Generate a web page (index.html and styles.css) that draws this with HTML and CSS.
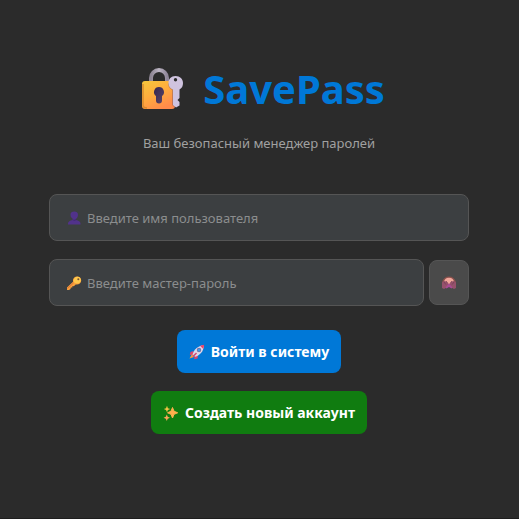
FILE: index.html
```html
<!DOCTYPE html>
<html lang="ru">
<head>
<meta charset="utf-8">
<meta name="viewport" content="width=device-width, initial-scale=1">
<title>SavePass</title>
<link rel="stylesheet" href="styles.css">
</head>
<body>
<main class="login">
  <header class="brand">
    <h1 class="title">
      <svg class="logo" viewBox="0 0 42 42" aria-hidden="true">
        <defs>
          <linearGradient id="gold" x1="0" y1="0" x2=".6" y2="1"><stop offset="0" stop-color="#f5c73c"/><stop offset=".5" stop-color="#ffad3d"/><stop offset="1" stop-color="#ff8a4b"/></linearGradient>
          <linearGradient id="steel" x1="0" y1="0" x2="1" y2="0"><stop offset="0" stop-color="#8d8593"/><stop offset=".5" stop-color="#bcb5c3"/><stop offset="1" stop-color="#8f8699"/></linearGradient>
          <linearGradient id="hole" x1="0" y1="0" x2="1" y2="1"><stop offset="0" stop-color="#35254f"/><stop offset="1" stop-color="#5b4668"/></linearGradient>
        </defs>
        <path d="M10 17V10a8 8 0 0 1 16 0v7" fill="none" stroke="url(#steel)" stroke-width="4"/>
        <rect x="1" y="13" width="33" height="28" rx="3" fill="url(#gold)"/>
        <path d="M2 16v21q0 3 4 3" fill="none" stroke="#d88a2e" stroke-width="1.500"/>
        <path d="M18 19a5 5 0 0 0-3 9v4.500a3 3 0 0 0 6 0V28a5 5 0 0 0-3-9z" fill="url(#hole)"/>
        <path d="M27 15q0 5 4 7v15l3 3v-20z" fill="#8b5f62" opacity=".5"/>
        <path fill-rule="evenodd" d="M34.500 8c-4.500 0-7 3-7 7 0 3 1.500 5.500 4.500 6.500V37l3 2.500 3.500-2V34l-2-2 2-2v-8.500c2.500-1.300 3.500-3.500 3.500-6.500 0-4-3-7-7.500-7zM34.500 10a1.700 1.700 0 1 1 0 3.400 1.700 1.700 0 0 1 0-3.400z" fill="#cfc3df"/>
      </svg>
      <span>SavePass</span>
    </h1>
    <p class="tagline">Ваш безопасный менеджер паролей</p>
  </header>
  <form class="form">
    <div class="field">
      <svg class="icon field-icon" viewBox="0 0 16 16" aria-hidden="true">
        <path d="M2 14.500v-1c0-2 2-3 4.500-3.500l.2-1.300C5 7.500 4.500 6.500 4.500 4.500 4.500 2.500 6 1.500 8.200 1.500s3.800 1.200 3.800 3.200c0 2-.8 3.300-2.200 4.200l.2 1.200c2.500.5 4.500 1.500 4.500 3.400v1z" fill="#51328a"/>
        <path d="M7 9.500q1.500.8 3-.6l.2 1.200q-1.500 1-3.400.2z" fill="#402670"/>
      </svg>
      <input class="input" type="text" placeholder="Введите имя пользователя" aria-label="Имя пользователя">
    </div>
    <div class="password-row">
      <div class="field">
        <svg class="icon field-icon" viewBox="0 0 16 16" aria-hidden="true">
          <path d="M1 12.500 7 6.800C6.500 4 8 1.800 10.700 1.500c2.600-.2 4.600 1.500 4.500 4-.1 2.800-2.700 4.600-5.500 4L7.800 11.200 6.500 11l-.2 1.400-1.500.1-.3 1.500-1.500 1H1z" fill="#f9a23b"/>
          <path d="M7.500 5.500C8 3 9.500 1.700 11.500 1.700c2 .1 3.300 1.500 3.400 3.300-.2 2-1.500 3.500-3.700 3.500-2 .1-3.400-1-3.700-3z" fill="#ffc94c"/>
          <path d="m1.500 13.500 6-5.500" stroke="#e2703b"/>
          <circle cx="12.300" cy="4.200" r="1" fill="#765437"/>
        </svg>
        <input class="input" type="password" placeholder="Введите мастер-пароль" aria-label="Мастер-пароль">
      </div>
      <button class="reveal" type="button" aria-label="Показать пароль">
        <svg class="icon" viewBox="0 0 16 16" aria-hidden="true">
          <path d="M1 7C2 3.500 4.500 1.500 8 1.500s6 2 7 5.500l-.5 4h-13z" fill="#8a504c"/>
          <path d="M3 7.500C3 4.500 5 2.700 8 2.700s5 1.800 5 4.800l-2 2H5z" fill="#f0a69a"/>
          <path d="M1 7.500 3 6l2 .5 3 2.500 3-2.500 2-.5 2 1.500V13l-2 1-2.500-1.500L8 10l-2.500 2.500L3 14l-2-1z" fill="#96516b"/>
          <path d="m4.500 12.500 3.500-4 3.500 4-1 1L8 12l-2.500 1.500z" fill="#a94b94"/>
          <path d="m3 7 1.800 2.500M5 6l1.500 2M13 7l-1.800 2.500M11 6 9.500 8" stroke="#733c54" stroke-width=".8"/>
        </svg>
      </button>
    </div>
    <div class="actions">
      <button class="action primary" type="submit">
        <svg class="icon" viewBox="0 0 16 16" aria-hidden="true">
          <path d="M4.500 7 1.500 8 .8 11l3.400-.5zM9 11l-.5 3.500-3.300.7.500-3.500z" fill="#e54368"/>
          <path d="m3 10-2.500 4.500L5 13z" fill="#ff9840"/>
          <path d="M3.500 10.500C5 5.500 8.500 2 15 1c-.3 6.500-4 10.300-9 11.800z" fill="#ded7e9"/>
          <path d="M11 1.800 15.200.8 14.300 5z" fill="#ef4168"/>
          <circle cx="10" cy="6" r="2.200" fill="#7d6a9b"/><circle cx="10" cy="6" r="1.500" fill="#4199e6"/>
          <path d="M4 12.500 7.500 9" stroke="#d94a72" stroke-width="1.600"/>
        </svg>
        <span>Войти в систему</span>
      </button>
      <button class="action success" type="button">
        <svg class="icon" viewBox="0 0 16 16" aria-hidden="true">
          <path d="M9.500 2.500 11 6.200l3.700 1.600L11 9.300 9.500 13 8 9.300 4.500 7.800 8 6.200z" fill="#ffb04d" stroke="#ffb04d" stroke-linejoin="round"/>
          <path d="m4 .8.900 2.400L7.300 4l-2.400 1L4 7.300 3 5 .8 4 3 3.200z" fill="#f4c444"/>
          <path d="m3.800 9.500.9 2.300 2.300 1-2.300.9-.9 2.200-1-2.200-2.200-.9 2.200-1z" fill="#ffa458"/>
        </svg>
        <span>Создать новый аккаунт</span>
      </button>
    </div>
  </form>
</main>
</body>
</html>
```
FILE: styles.css
```css
* {
  box-sizing: border-box;
}

body {
  margin: 0;
  min-height: 100vh;
  background: #2b2b2b;
  border-bottom: 1px solid #1e1e1e;
  color: #fff;
  font-family: "Segoe UI", "Noto Sans", "Open Sans", sans-serif;
  font-size: 13px;
}

.login {
  padding: 60px 50px 40px 49px;
}

.brand {
  text-align: center;
}

.title {
  display: flex;
  justify-content: center;
  align-items: center;
  gap: 20px;
  margin: 0;
  padding-left: 8px;
  color: #0078d7;
  font-size: 40px;
  line-height: 58px;
}

.logo {
  width: 42px;
  height: 42px;
}

.tagline {
  margin: 15px 0 0;
  color: #a0a0a0;
  line-height: 20px;
}

.form {
  display: flex;
  flex-direction: column;
  gap: 18px;
  margin-top: 41px;
}

.field {
  position: relative;
  flex: 1;
}

.icon {
  width: 16px;
  height: 16px;
  flex: none;
}

.field-icon {
  position: absolute;
  left: 17px;
  top: 16px;
}

.input {
  display: block;
  width: 100%;
  height: 47px;
  padding: 0 16px 0 37px;
  border: 1px solid #555;
  border-radius: 8px;
  background: #3c3f41;
  color: #fff;
  font: inherit;
}

.input::placeholder {
  color: #8b8d8e;
  opacity: 1;
}

.password-row {
  display: flex;
  align-items: center;
  gap: 5px;
}

.reveal {
  display: flex;
  align-items: center;
  justify-content: center;
  width: 40px;
  height: 45px;
  padding: 0;
  border: 1px solid #555;
  border-radius: 8px;
  background: #4a4a4a;
}

.actions {
  display: flex;
  flex-direction: column;
  align-items: center;
  gap: 18px;
  margin-top: 6px;
}

.action {
  display: flex;
  align-items: center;
  gap: 6px;
  height: 43px;
  padding: 0 12px;
  border: 0;
  border-radius: 8px;
  color: #fff;
  font: inherit;
  font-size: 14px;
  font-weight: 700;
}

.primary {
  background: #0078d7;
}

.success {
  background: #107c10;
}
```
